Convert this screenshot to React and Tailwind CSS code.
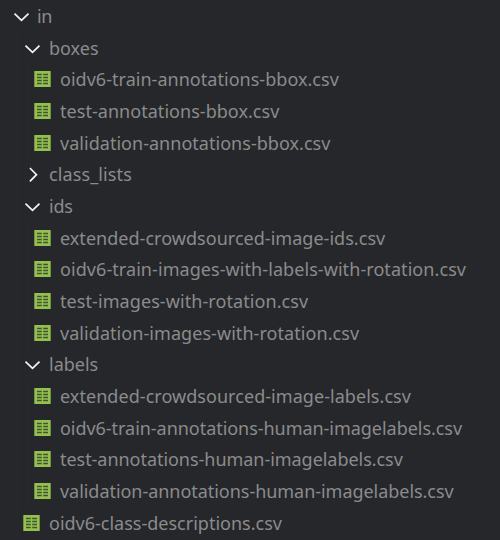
const rows = [
  { kind: 'open', depth: 0, name: 'in', tracking: '-ml-px tracking-[-0.3px]' },
  { kind: 'open', depth: 1, name: 'boxes', tracking: 'tracking-normal' },
  { kind: 'file', depth: 2, name: 'oidv6-train-annotations-bbox.csv', tracking: 'tracking-[0.03px]' },
  { kind: 'file', depth: 2, name: 'test-annotations-bbox.csv', tracking: 'tracking-[0.04px]' },
  { kind: 'file', depth: 2, name: 'validation-annotations-bbox.csv', tracking: 'tracking-[0.03px]' },
  { kind: 'closed', depth: 1, name: 'class_lists', tracking: 'tracking-[0.12px]' },
  { kind: 'open', depth: 1, name: 'ids', tracking: 'tracking-[-0.2px]' },
  { kind: 'file', depth: 2, name: 'extended-crowdsourced-image-ids.csv', tracking: 'tracking-[0.03px]' },
  { kind: 'file', depth: 2, name: 'oidv6-train-images-with-labels-with-rotation.csv', tracking: 'tracking-[0.07px]' },
  { kind: 'file', depth: 2, name: 'test-images-with-rotation.csv', tracking: 'tracking-[0.08px]' },
  { kind: 'file', depth: 2, name: 'validation-images-with-rotation.csv', tracking: 'tracking-[0.06px]' },
  { kind: 'open', depth: 1, name: 'labels', tracking: 'tracking-normal' },
  { kind: 'file', depth: 2, name: 'extended-crowdsourced-image-labels.csv', tracking: 'tracking-[0.05px]' },
  { kind: 'file', depth: 2, name: 'oidv6-train-annotations-human-imagelabels.csv', tracking: 'tracking-[-0.04px]' },
  { kind: 'file', depth: 2, name: 'test-annotations-human-imagelabels.csv', tracking: 'tracking-[-0.04px]' },
  { kind: 'file', depth: 2, name: 'validation-annotations-human-imagelabels.csv', tracking: 'tracking-[-0.04px]' },
  { kind: 'file', depth: 1, name: 'oidv6-class-descriptions.csv', tracking: 'tracking-normal' },
];

function Icon({ kind }) {
  if (kind === 'file') {
    return (
      <svg width="17" height="16" viewBox="0 0 17 16" className="block">
        <path d="M0.3 0h16.4v16H0.3z" fill="#93c04f" />
        <path d="M3 3.5h4.8M9.2 3.5h4.8M3 6.5h4.8M9.2 6.5h4.8M3 9.5h4.8M9.2 9.5h4.8M3 12.5h4.8M9.2 12.5h4.8" stroke="#42552f" strokeWidth="1.6" />
      </svg>
    );
  }
  return (
    <svg width="20" height="20" viewBox="0 0 20 20" fill="none" stroke="#f4f4f4" strokeWidth="1.7" className="block">
      <path d={kind === 'open' ? 'M2.5 7.6 9.5 14.4 16.5 7.6' : 'M6.9 4 13.5 10.7 6.9 17.4'} />
    </svg>
  );
}

export default function App() {
  return (
    <div className="h-[540px] w-[500px] overflow-hidden bg-[#26272b] font-['Noto_Sans','Open_Sans',sans-serif] text-[18px] text-[#8b8b8b]">
      {rows.map((row) => (
        <div key={row.name} className="flex h-[31.7px] items-center whitespace-nowrap pl-[12px]">
          {row.depth > 0 && <span className="ml-[5px] h-full w-[6px] shrink-0 border-l border-[#292a2e]" />}
          {row.depth > 1 && <span className="ml-[5px] h-full w-[6px] shrink-0 border-l border-[#292a2e]" />}
          <span className="w-[26px] shrink-0">
            <Icon kind={row.kind} />
          </span>
          <span className={`pt-px ${row.tracking}`}>{row.name}</span>
        </div>
      ))}
    </div>
  );
}
